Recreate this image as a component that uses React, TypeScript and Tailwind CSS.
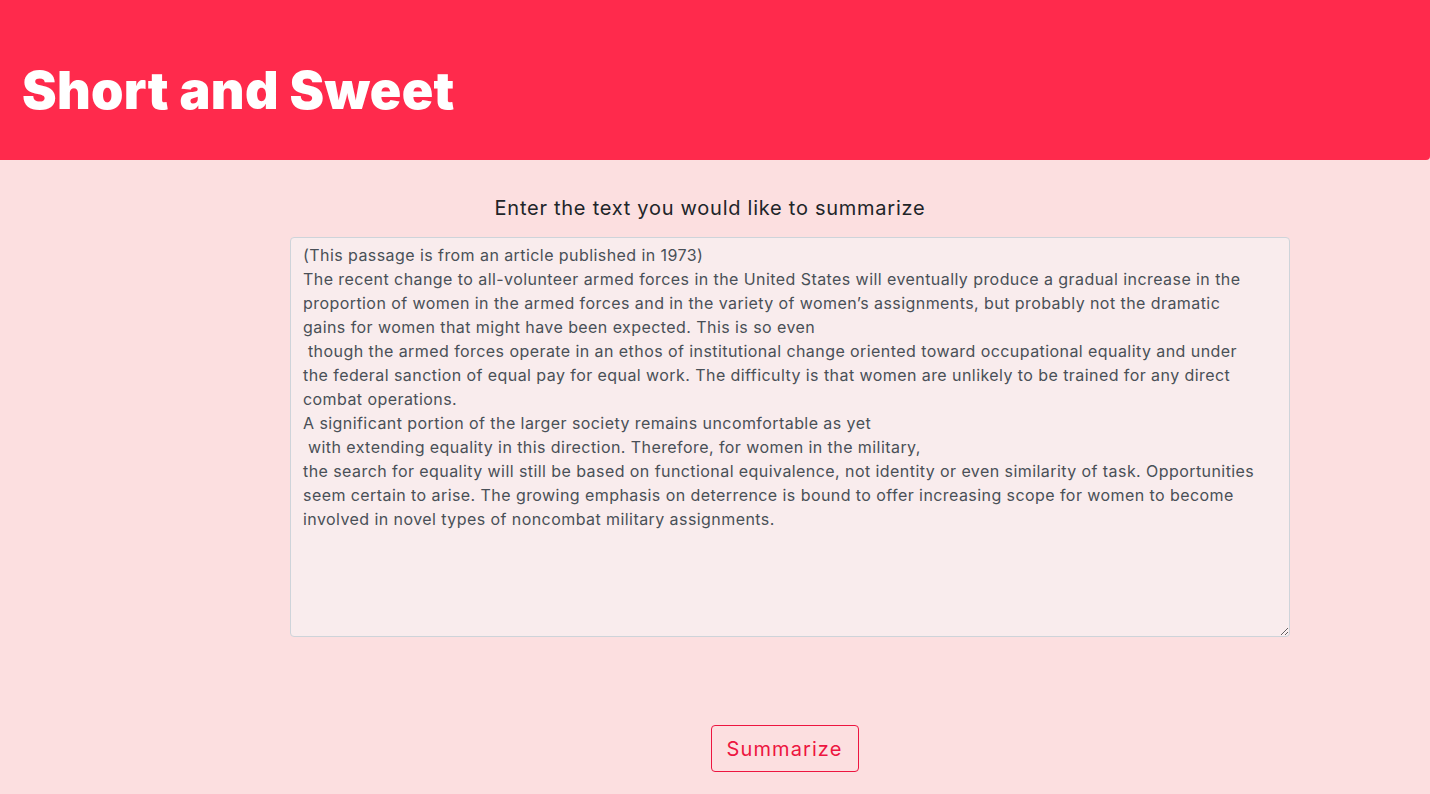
const TEXT = `(This passage is from an article published in 1973)
The recent change to all-volunteer armed forces in the United States will eventually produce a gradual increase in the
proportion of women in the armed forces and in the variety of women’s assignments, but probably not the dramatic
gains for women that might have been expected. This is so even
 though the armed forces operate in an ethos of institutional change oriented toward occupational equality and under
the federal sanction of equal pay for equal work. The difficulty is that women are unlikely to be trained for any direct
combat operations.
A significant portion of the larger society remains uncomfortable as yet
 with extending equality in this direction. Therefore, for women in the military,
the search for equality will still be based on functional equivalence, not identity or even similarity of task. Opportunities
seem certain to arise. The growing emphasis on deterrence is bound to offer increasing scope for women to become
involved in novel types of noncombat military assignments.`;

export default function App() {
  return (
    <div className="min-h-[794px] bg-[#fcdfe0] font-['Inter',sans-serif]">
      <header className="h-[160px] bg-[#ff2a4c] rounded-br-[4px] pl-[22px] pt-[65px]">
        <h1 className="text-[52px] leading-none font-black text-white tracking-[0.3px]">
          Short and Sweet
        </h1>
      </header>
      <main className="flex flex-col">
        <label
          htmlFor="src"
          className="mt-[35px] h-[26px] text-center text-[20px] leading-[26px] text-[#212529] tracking-[0.74px] pr-[10px]"
        >
          Enter the text you would like to summarize
        </label>
        <textarea
          id="src"
          wrap="off"
          defaultValue={TEXT}
          className="mt-[16px] ml-[290px] w-[1000px] h-[400px] overflow-hidden resize-y bg-[#f9eced] border border-[#ced4da] rounded-[4px] px-[12px] pt-[5px] pb-[7px] text-[16px] leading-[24px] text-[#495057] tracking-[0.43px] outline-none"
        />
        <div className="flex justify-center mt-[88px] pl-[139px]">
          <button className="w-[148px] h-[47px] border border-[#ed1540] rounded-[4px] text-[20px] text-[#ed1540] tracking-[1.1px] bg-transparent">
            Summarize
          </button>
        </div>
      </main>
    </div>
  );
}
